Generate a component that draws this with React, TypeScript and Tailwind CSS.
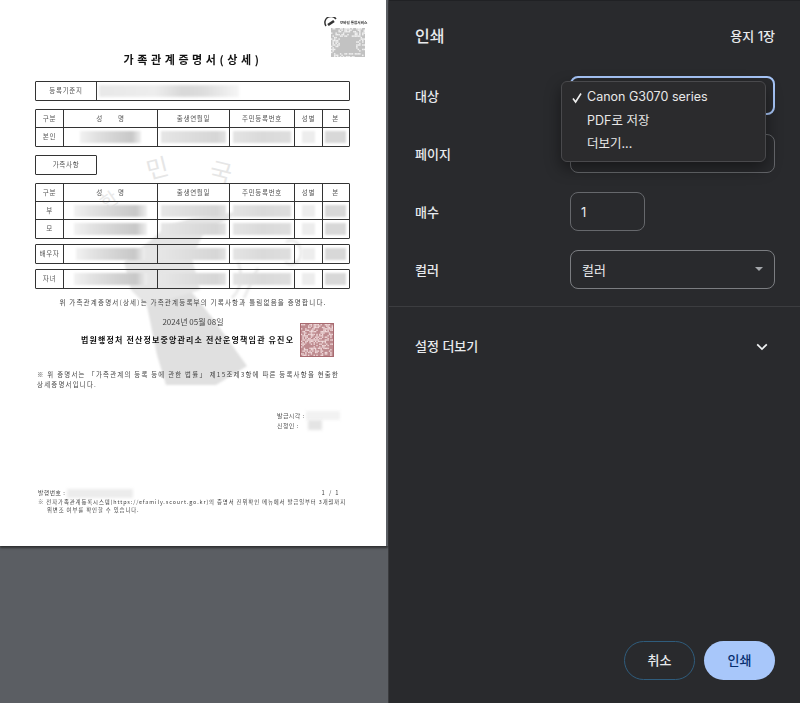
import React from "react";

const sans = "font-['Inter','Noto_Sans_CJK_KR',sans-serif]";
const doc = "font-['Noto_Sans_CJK_KR',sans-serif]";
const cols = "grid grid-cols-[28px_94px_72px_65px_28px_25px]";

function rnd(i: number) {
  const x = Math.sin(i * 12.9898) * 43758.5453;
  return x - Math.floor(x);
}

function Noise({ size, fg, bg, hole, n = 13, keep = 0.55 }: { size: number; fg: string; bg: string; hole?: boolean; n?: number; keep?: number }) {
  const c = size / n;
  const cells = [];
  const a = Math.floor(n * 0.27);
  const b = n - a - 1;
  for (let y = 0; y < n; y++) {
    for (let x = 0; x < n; x++) {
      if (hole && x >= a && x <= b && y >= a && y <= b) continue;
      if (rnd(x * 17 + y * 31 + 3) > keep) cells.push(<rect key={`${x}-${y}`} x={x * c} y={y * c} width={c} height={c} fill={fg} />);
    }
  }
  return (
    <svg width={size} height={size} viewBox={`0 0 ${size} ${size}`} className="blur-[0.5px]">
      <rect width={size} height={size} fill={bg} />
      {cells}
    </svg>
  );
}

const BL = {
  a: "bg-[linear-gradient(90deg,#f2f2f2,#e2e2e2_25%,#d2d2d2_60%,#c8c8c8_85%,#f0f0f0)]",
  b: "bg-[linear-gradient(90deg,#e6e6e6,#dcdcdc_50%,#d6d6d6_85%,#e2e2e2)]",
  c: "bg-[linear-gradient(90deg,#e4e4e4,#dadada_50%,#dedede)]",
  d: "bg-[#ededed]",
  e: "bg-[#d8d8d8]",
};

function Blur({ t, p = "px-[4px]" }: { t: string; p?: string }) {
  return (
    <div className={`flex h-full items-center overflow-hidden ${p}`}>
      <div className={`h-[12px] w-full blur-[1.2px] ${t}`} />
    </div>
  );
}

function Cell({ children, last }: { children?: React.ReactNode; last?: boolean }) {
  return (
    <div className={`flex items-center justify-center overflow-hidden whitespace-nowrap text-[6.5px] tracking-[0.7px] text-[#555] ${last ? "" : "border-r border-[#333]"}`}>
      {children}
    </div>
  );
}

function Head() {
  return (
    <div className={`${cols} h-[18px] border-b border-[#333]`}>
      <Cell>구분</Cell>
      <Cell>성&nbsp;&nbsp;&nbsp;&nbsp;&nbsp;&nbsp;&nbsp;명</Cell>
      <Cell>출생연월일</Cell>
      <Cell>주민등록번호</Cell>
      <Cell>성별</Cell>
      <Cell last>본</Cell>
    </div>
  );
}

function Row({ label, line, pad = "px-[10px]" }: { label: string; line?: boolean; pad?: string }) {
  return (
    <div className={`${cols} h-[18px] ${line ? "border-b border-[#333]" : ""}`}>
      <Cell>{label}</Cell>
      <Cell><div className="h-full w-full"><Blur t={BL.a} p={pad} /></div></Cell>
      <Cell><div className="h-full w-full"><Blur t={BL.b} p="px-[3px]" /></div></Cell>
      <Cell><div className="h-full w-full"><Blur t={BL.c} p="px-[3px]" /></div></Cell>
      <Cell><div className="h-full w-full"><Blur t={BL.d} p="px-[7px]" /></div></Cell>
      <Cell last><div className="h-full w-full"><Blur t={BL.e} p="px-[2px]" /></div></Cell>
    </div>
  );
}

function Watermark() {
  return (
    <div className="absolute left-0 top-0">
      <svg width="386" height="546" viewBox="0 0 386 546" className="blur-[0.8px]">
        <polygon points="147,306 190,290 214,320 247,366 216,385 166,385 157,355" fill="#e0e0e0" />
        <polygon points="124,262 168,226 192,218 243,211 204,232 192,258 200,290 147,306 131,290" fill="#e6e6e6" />
        <path d="M238 262 q8 22 -6 36 M258 268 l-14 30 M286 242 a10 12 0 1 1 -1 20" fill="none" stroke="#e8e8e8" strokeWidth="2.5" />
      </svg>
      <span className={`absolute left-[146px] top-[155px] rotate-[-14deg] text-[24px] leading-none text-[#e6e6e6] ${doc}`}>민</span>
      <span className={`absolute left-[210px] top-[159px] rotate-[14deg] text-[24px] leading-none text-[#e6e6e6] ${doc}`}>국</span>
      <span className={`absolute left-[100px] top-[190px] rotate-[-35deg] text-[18px] leading-none text-[#e8e8e8] ${doc}`}>한</span>
    </div>
  );
}

function Paper() {
  return (
    <div className={`relative flex h-[546px] w-[386px] flex-col bg-white pl-[35px] pr-[36px] ${doc}`}>
      <Watermark />
      <div className="relative flex h-full flex-col blur-[0.25px]">
        <div className="h-[17px]" />
        <div className="flex h-[40px] justify-end">
          <div className="mr-[-15px] flex w-[41px] flex-col items-end">
            <div className="flex h-[11px] w-[41px] items-center">
              <svg width="15" height="11" viewBox="0 0 15 11" className="shrink-0"><path d="M2 9 A6 6 0 0 1 12 2" fill="none" stroke="#333" strokeWidth="1.5" /><path d="M4 8 L10 4" stroke="#333" strokeWidth="2.6" /></svg>
              <span className="ml-[1px] whitespace-nowrap text-[3.6px] font-bold leading-none text-[#333]">모바일 통합서비스</span>
            </div>
            <div className="h-[31px] w-[34px] overflow-hidden">
              <Noise size={34} fg="#f0f0f0" bg="#c2c2c2" hole n={23} keep={0.6} />
            </div>
          </div>
        </div>
        <div className="mt-[-3px] flex h-[10px] items-center justify-center pl-[1px] text-[11px] font-bold leading-none tracking-[3.6px] text-[#111]">
          가족관계증명서(상세)
        </div>
        <div className="mt-[17px] flex h-[20px] w-[315px] rounded-[1px] border border-[#333]">
          <div className="flex w-[61px] items-center justify-center border-r border-[#333] text-[6.5px] tracking-[0.7px] text-[#555]">등록기준지</div>
          <div className="flex-1 py-[3px] pl-[2px] pr-[110px]">
            <div className="h-full w-full bg-[linear-gradient(90deg,#e8e8e8,#ededed_40%,#d8d8d8_60%,#dddddd_75%,#f6f6f6)] blur-[1.5px]" />
          </div>
        </div>
        <div className="mt-[8px] w-[315px] rounded-[1px] border border-[#333]">
          <Head />
          <Row label="본인" pad="px-[16px]" />
        </div>
        <div className="mt-[8px] flex h-[20px] w-[62px] items-center justify-center rounded-[1px] border border-[#333] text-[6.5px] tracking-[0.7px] text-[#555]">가족사항</div>
        <div className="mt-[8px] w-[315px] rounded-[1px] border border-[#333]">
          <Head />
          <Row label="부" line />
          <Row label="모" />
        </div>
        <div className="mt-[5px] w-[315px] rounded-[1px] border border-[#333]">
          <Row label="배우자" pad="px-[12px]" />
        </div>
        <div className="mt-[5px] w-[315px] rounded-[1px] border border-[#333]">
          <Row label="자녀" />
        </div>
        <div className="ml-[-35px] mt-[8px] flex h-[10px] w-[386px] items-center justify-center whitespace-nowrap text-[6.5px] leading-none tracking-[1.2px] text-[#444]">
          위 가족관계증명서(상세)는 가족관계등록부의 기록사항과 틀림없음을 증명합니다.
        </div>
        <div className="ml-[-35px] mt-[10px] flex h-[10px] w-[386px] items-center justify-center text-[8px] leading-none text-[#444]">
          2024년 05월 08일
        </div>
        <div className="relative mt-[-4px] flex h-[34px] items-center">
          <span className="ml-[46px] whitespace-nowrap text-[8px] font-bold leading-none tracking-[1.15px] text-[#111]">법원행정처 전산정보중앙관리소 전산운영책임관 유진오</span>
          <div className="absolute left-[265px] top-[0px] border border-[#a86a70]">
            <Noise size={32} fg="#efd9da" bg="#bd8a8e" n={23} />
          </div>
        </div>
        <div className="ml-[2px] mt-[13px] w-[302px] whitespace-nowrap text-[6.4px] leading-[10px] tracking-[1.25px] text-[#444]">
          ※ 위 증명서는 「가족관계의 등록 등에 관한 법률」 제15조제3항에 따른 등록사항을 현출한<br />상세증명서입니다.
        </div>
        <div className="ml-[242px] mt-[21px] flex flex-col text-[6px] leading-[9px] tracking-[0.4px] text-[#555]">
          <div className="flex items-center whitespace-nowrap">발급시각 :<span className="ml-[1px] h-[9px] w-[34px] bg-[#f2f2f2] blur-[1.5px]" /></div>
          <div className="flex items-center whitespace-nowrap"><span className="w-[31px]">신청인 :</span><span className="h-[10px] w-[14px] bg-[#e4e4e4] blur-[1.5px]" /></div>
        </div>
        <div className="ml-[3px] mt-[58px] flex h-[10px] w-[301px] items-center text-[5.8px] leading-none tracking-[0.5px] text-[#444]">
          <span className="whitespace-nowrap">발행번호 :</span>
          <span className="ml-[2px] h-[9px] w-[66px] bg-[#ececec] blur-[1.5px]" />
          <span className="ml-auto whitespace-pre">1  /  1</span>
        </div>
        <div className="ml-[3px] w-[304px] text-[5.4px] leading-[8px] tracking-[0.88px] text-[#444]">
          <div className="whitespace-nowrap">※ 전자가족관계등록시스템(https://efamily.scourt.go.kr)의 증명서 진위확인 메뉴에서 발급일부터 3개월까지</div>
          <div className="pl-[9px]">위변조 여부를 확인할 수 있습니다.</div>
        </div>
      </div>
    </div>
  );
}

function Label({ children }: { children: React.ReactNode }) {
  return <div className="w-[155px] pt-[2px] text-[13px] font-medium leading-none text-[#e8eaed]">{children}</div>;
}

function FormRow({ label, children }: { label: string; children?: React.ReactNode }) {
  return (
    <div className="flex h-[39px] items-center">
      <Label>{label}</Label>
      {children}
    </div>
  );
}

function Panel() {
  return (
    <div className={`relative flex h-[703px] flex-1 flex-col border-t border-[#202124] bg-[#292a2d] pl-[26px] pr-[25px] ${sans}`}>
      <div className="flex h-[75px] items-start justify-between pt-[25px]">
        <span className="text-[16px] font-medium leading-[20px] text-[#e8eaed]">인쇄</span>
        <span className="text-[13px] font-medium leading-[20px] text-[#e8eaed]">용지 1장</span>
      </div>
      <div className="flex flex-col gap-[19px]">
        <FormRow label="대상">
          <div className="h-[39px] w-[205px] rounded-[8px] border-2 border-[#a8c7fa]" />
        </FormRow>
        <FormRow label="페이지">
          <div className="h-[39px] w-[205px] rounded-[8px] border border-[#66686c]" />
        </FormRow>
        <FormRow label="매수">
          <div className="flex h-[39px] w-[75px] items-center rounded-[8px] border border-[#66686c] pl-[10px] pt-[2px] text-[13px] text-[#e8eaed]">1</div>
        </FormRow>
        <FormRow label="컬러">
          <div className="flex h-[39px] w-[205px] items-center justify-between rounded-[8px] border border-[#7b7d81] pl-[11px] pr-[11px] text-[13px] text-[#e8eaed]">
            <span className="pt-[2px]">컬러</span>
            <svg width="8" height="4" viewBox="0 0 8 4" className="mb-[2px]"><path d="M0 0 H8 L4 4 Z" fill="#a4a7ab" /></svg>
          </div>
        </FormRow>
      </div>
      <div className="ml-[-26px] mr-[-25px] mt-[17px] h-px bg-[#3c3d40]" />
      <div className="flex h-[78px] items-center justify-between pr-[7px] pt-[1px]">
        <span className="text-[13px] font-medium text-[#e8eaed]">설정 더보기</span>
        <svg width="12" height="8" viewBox="0 0 12 8"><path d="M1.2 1.4 L6 6 L10.8 1.4" fill="none" stroke="#f1f3f4" strokeWidth="1.7" /></svg>
      </div>
      <div className="flex-1" />
      <div className="flex justify-end gap-[9px] pb-[23px]">
        <div className="flex h-[39px] w-[71px] items-center justify-center rounded-full border border-[#2f5c7c] text-[13px] font-medium text-[#e8eaed]">취소</div>
        <div className="flex h-[39px] w-[71px] items-center justify-center rounded-full bg-[#a8c7fa] text-[13px] font-medium text-[#062e6f]">인쇄</div>
      </div>
      <div className="absolute left-[172px] top-[80px] flex h-[81px] w-[205px] flex-col rounded-[6px] border border-[#49494c] bg-[#2b2b2d] pt-[4px] text-[12.5px] text-[#e8e8e8] shadow-[0_6px_16px_rgba(0,0,0,0.45)]">
        <div className="flex h-[23.5px] items-center">
          <svg width="25" height="12" viewBox="0 0 25 12" className="shrink-0"><path d="M11 6.5 L13.6 10 L19 1.5" fill="none" stroke="#eeeeee" strokeWidth="1.6" /></svg>
          <span>Canon G3070 series</span>
        </div>
        <div className="flex h-[23.5px] items-center pl-[25px]">PDF로 저장</div>
        <div className="flex h-[23.5px] items-center pl-[25px]">더보기...</div>
      </div>
    </div>
  );
}

export default function App() {
  return (
    <div className="flex h-[703px] w-[800px] overflow-hidden bg-[#5b5e63]">
      <div className="h-[703px] w-[389px] shrink-0 border-r border-[#3a3b3e]">
        <div className="shadow-[0_2px_2px_rgba(30,30,30,0.7)]"><Paper /></div>
      </div>
      <Panel />
    </div>
  );
}
